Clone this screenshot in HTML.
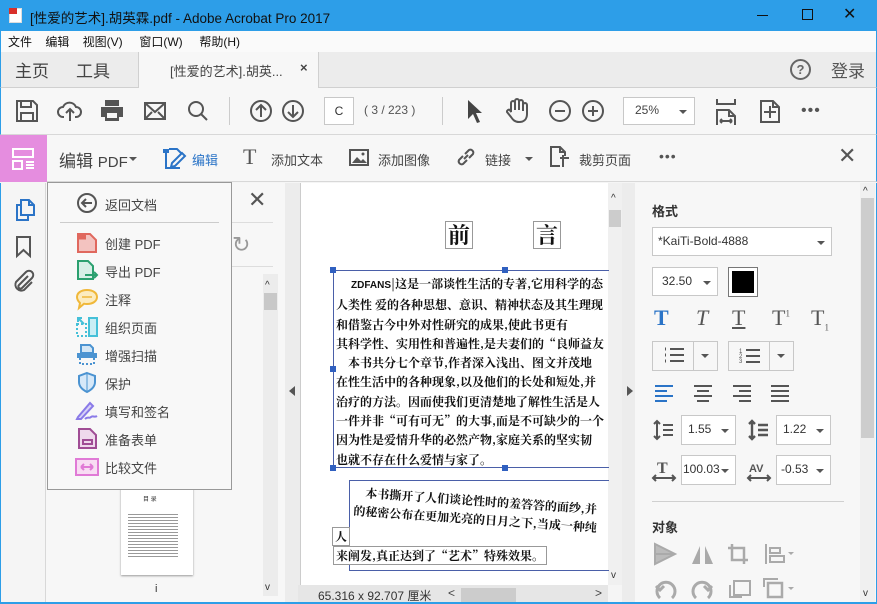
<!DOCTYPE html>
<html><head><meta charset="utf-8"><style>
*{margin:0;padding:0;box-sizing:border-box}
body{width:877px;height:604px;overflow:hidden;position:relative;background:#f5f5f5;font-family:"Liberation Sans","Noto Sans CJK SC",sans-serif;color:#333;font-size:13px}
.a{position:absolute}
svg{position:absolute;overflow:visible}
.ic{stroke:#555;fill:none;stroke-width:2}
.cj{font-family:"Noto Serif CJK SC","Noto Sans CJK SC",serif;color:#111}
.dd{border:1px solid #c8c8c8;background:#fff}
.ar{width:0;height:0;border-left:4px solid transparent;border-right:4px solid transparent;border-top:4px solid #555}
</style></head><body>
<!-- title bar -->
<div class="a" style="left:0;top:0;width:877px;height:31px;background:#2d9ee8"></div>
<div class="a" style="left:9px;top:8px;width:13px;height:15px;background:#fff;border:1px solid #ddd"></div>
<div class="a" style="left:9px;top:8px;width:8px;height:6px;background:#d9302a"></div>
<div class="a" style="left:30px;top:7px;font-size:13.5px;color:#111">[性爱的艺术].胡英霖.pdf - Adobe Acrobat Pro 2017</div>
<div class="a" style="left:757px;top:15px;width:11px;height:1px;background:#111"></div>
<div class="a" style="left:802px;top:9px;width:11px;height:11px;border:1px solid #111"></div>
<div class="a" style="left:843px;top:4px;font-size:16px;color:#111">✕</div>
<!-- menu -->
<div class="a" style="left:0;top:31px;width:877px;height:21px;background:#fafafa;border-left:1px solid #2d9ee8;border-right:1px solid #2d9ee8"></div>
<div class="a" style="left:8px;top:33px;font-size:12px;color:#111;word-spacing:0">文件&nbsp;&nbsp;&nbsp;&nbsp;编辑&nbsp;&nbsp;&nbsp;&nbsp;视图(V)&nbsp;&nbsp;&nbsp;&nbsp;&nbsp;窗口(W)&nbsp;&nbsp;&nbsp;&nbsp;&nbsp;帮助(H)</div>
<!-- tabs -->
<div class="a" style="left:0;top:52px;width:877px;height:36px;background:#ececec;border-bottom:1px solid #d0d0d0;border-left:1px solid #2d9ee8;border-right:1px solid #2d9ee8"></div>
<div class="a" style="left:15px;top:57px;font-size:17px;color:#444">主页</div>
<div class="a" style="left:76px;top:57px;font-size:17px;color:#444">工具</div>
<div class="a" style="left:138px;top:52px;width:181px;height:37px;background:#f7f7f7;border-left:1px solid #d0d0d0;border-right:1px solid #d0d0d0"></div>
<div class="a" style="left:170px;top:61px;font-size:13px;color:#444">[性爱的艺术].胡英...</div>
<div class="a" style="left:300px;top:60px;font-size:13px;color:#444;font-weight:bold">×</div>
<div class="a" style="left:790px;top:59px;width:21px;height:21px;border:2px solid #666;border-radius:50%;text-align:center;font-size:13px;line-height:17px;color:#666;font-weight:bold">?</div>
<div class="a" style="left:831px;top:57px;font-size:17px;color:#555">登录</div>
<!-- toolbar -->
<div class="a" style="left:0;top:88px;width:877px;height:47px;background:#f7f7f7;border-bottom:1px solid #d8d8d8;border-left:1px solid #2d9ee8;border-right:1px solid #2d9ee8"></div>
<svg style="left:16px;top:100px" width="22" height="22"><path class="ic" d="M1 1h16l4 4v16H1z M5 1v6h10V1 M5 21v-8h12v8"/></svg>
<svg style="left:58px;top:100px" width="24" height="22"><path class="ic" d="M6 17H5a5 5 0 0 1 0-10 7 7 0 0 1 13 0 5 5 0 0 1 0 10h-1 M12 21v-11 M8 13l4-4 4 4"/></svg>
<svg style="left:100px;top:99px" width="24" height="22"><path d="M5 1h14v6H5z M1 8h22v10h-4v4H5v-4H1z" fill="#555"/><rect x="7" y="14" width="10" height="5" fill="#f7f7f7"/></svg>
<svg style="left:144px;top:102px" width="22" height="18"><path class="ic" d="M1 1h20v16H1z M1 1l10 9 10-9 M1 17l7-7 M21 17l-7-7"/></svg>
<svg style="left:187px;top:100px" width="22" height="22"><circle class="ic" cx="9" cy="9" r="7"/><path class="ic" stroke-width="3" d="M14 14l6 6"/></svg>
<div class="a" style="left:229px;top:97px;width:1px;height:28px;background:#ccc"></div>
<svg style="left:250px;top:100px" width="22" height="22"><circle class="ic" cx="11" cy="11" r="10"/><path class="ic" d="M11 17V5 M6 10l5-5 5 5"/></svg>
<svg style="left:282px;top:100px" width="22" height="22"><circle class="ic" cx="11" cy="11" r="10"/><path class="ic" d="M11 5v12 M6 12l5 5 5-5"/></svg>
<div class="a dd" style="left:324px;top:97px;width:30px;height:28px;text-align:center;line-height:26px;font-size:12px">C</div>
<div class="a" style="left:364px;top:103px;font-size:12px;color:#555">( 3 / 223 )</div>
<div class="a" style="left:442px;top:97px;width:1px;height:28px;background:#ccc"></div>
<svg style="left:467px;top:99px" width="16" height="24"><path d="M1 1l14 13h-6l4 9-3 1-4-9-5 5z" fill="#444"/></svg>
<svg style="left:505px;top:98px" width="24" height="26"><path class="ic" stroke-width="1.8" d="M6 14V5a2 2 0 0 1 4 0v7V3a2 2 0 0 1 4 0v9V4a2 2 0 0 1 4 0v9V7a2 2 0 0 1 4 0v9c0 5-3 8-8 8-4 0-6-2-8-5l-4-5a2 2 0 0 1 3-2z"/></svg>
<svg style="left:549px;top:100px" width="22" height="22"><circle class="ic" cx="11" cy="11" r="10"/><path class="ic" d="M6 11h10"/></svg>
<svg style="left:582px;top:100px" width="22" height="22"><circle class="ic" cx="11" cy="11" r="10"/><path class="ic" d="M6 11h10 M11 6v10"/></svg>
<div class="a dd" style="left:623px;top:97px;width:72px;height:28px"></div>
<div class="a" style="left:635px;top:103px;font-size:12px;color:#444">25%</div>
<div class="a ar" style="left:679px;top:110px"></div>
<svg style="left:716px;top:99px" width="20" height="26"><path class="ic" d="M1 0v5h18V0 M1 26V11h12l6 6v9 M13 11v6h6 M4 22h12 M4 22l2-2 M4 22l2 2 M16 22l-2-2 M16 22l-2 2" stroke-width="1.8"/></svg>
<svg style="left:760px;top:100px" width="20" height="23"><path class="ic" stroke-width="1.8" d="M1 1h12l6 6v15H1z M13 1v6h6 M10 6v12 M4 12h12"/></svg>
<div class="a" style="left:801px;top:102px;font-size:16px;color:#555;letter-spacing:1px">•••</div>
<!-- edit toolbar -->
<div class="a" style="left:0;top:135px;width:877px;height:47px;background:#f7f7f7;border-bottom:1px solid #d8d8d8;border-left:1px solid #2d9ee8;border-right:1px solid #2d9ee8"></div>
<div class="a" style="left:0;top:135px;width:47px;height:47px;background:#e58ddf"></div>
<svg style="left:12px;top:148px" width="24" height="22"><path stroke="#fff" stroke-width="2" fill="none" d="M1 1h20v8H1z M1 13h9v8H1z M14 14h8 M14 17h8 M14 20h8"/></svg>
<div class="a" style="left:59px;top:147px;font-size:17px;color:#444">编辑 <span style="font-size:15px">PDF</span></div>
<div class="a ar" style="left:129px;top:157px"></div>
<svg style="left:162px;top:147px" width="24" height="22"><path d="M1 2h6v4H1z" fill="#2b74c7"/><path stroke="#2b74c7" stroke-width="2" fill="none" d="M4 6v15h14 M7 2h8l4 4 M10 16l10-10 3 3-10 10-4 1z"/></svg>
<div class="a" style="left:192px;top:150px;font-size:13px;color:#2b74c7">编辑</div>
<div class="a" style="left:243px;top:144px;font-size:22px;color:#555;font-family:'Liberation Serif',serif">T</div>
<div class="a" style="left:271px;top:150px;font-size:13px;color:#444">添加文本</div>
<svg style="left:349px;top:149px" width="20" height="17"><rect class="ic" x="1" y="1" width="18" height="15"/><path d="M3 14l5-6 4 4 2-2 4 4z" fill="#555"/><circle cx="14" cy="5" r="1.5" fill="#555"/></svg>
<div class="a" style="left:378px;top:150px;font-size:13px;color:#444">添加图像</div>
<svg style="left:455px;top:146px" width="22" height="22"><path class="ic" d="M9 13l4-4 M8 10l-4 4a3 3 0 0 0 4 4l4-4 M14 12l4-4a3 3 0 0 0-4-4l-4 4"/></svg>
<div class="a" style="left:485px;top:150px;font-size:13px;color:#444">链接</div>
<div class="a ar" style="left:525px;top:157px"></div>
<svg style="left:550px;top:146px" width="20" height="22"><path class="ic" stroke-width="1.8" d="M10 20H1V1h9l5 5v4 M10 1v5h5 M10 12h9 M13 9v12"/></svg>
<div class="a" style="left:579px;top:150px;font-size:13px;color:#444">裁剪页面</div>
<div class="a" style="left:659px;top:148px;font-size:14px;color:#555;letter-spacing:1px">•••</div>
<div class="a" style="left:838px;top:143px;font-size:22px;color:#555">✕</div>
<!-- left nav -->
<div class="a" style="left:0;top:183px;width:46px;height:421px;background:#f5f5f5;border-left:1px solid #2d9ee8;border-right:1px solid #d8d8d8"></div>
<svg style="left:15px;top:199px" width="20" height="22"><path stroke="#2b74c7" stroke-width="2" fill="none" d="M6 1h8l5 5v10H6z M14 1v5h5 M6 6H2v15h11v-5"/></svg>
<svg style="left:16px;top:236px" width="16" height="22"><path class="ic" d="M1 1h13v19l-6.5-6L1 20z"/></svg>
<svg style="left:13px;top:270px" width="22" height="22"><path class="ic" d="M15 6l-9 9a2 2 0 0 0 3 3l10-10a4 4 0 0 0-6-6L3 12a6 6 0 0 0 8 8l8-8"/></svg>
<!-- left panel -->
<div class="a" style="left:46px;top:183px;width:239px;height:421px;background:#f7f7f7"></div>
<div class="a" style="left:248px;top:187px;font-size:22px;color:#555">✕</div>
<div class="a" style="left:225px;top:222px;width:48px;height:1px;background:#ddd"></div>
<div class="a" style="left:225px;top:266px;width:48px;height:1px;background:#ddd"></div>
<div class="a" style="left:232px;top:232px;font-size:22px;color:#999">↻</div>
<div class="a" style="left:263px;top:274px;width:15px;height:322px;background:#ececec"></div>
<div class="a" style="left:265px;top:280px;font-size:10px;color:#333">^</div>
<div class="a" style="left:264px;top:293px;width:13px;height:17px;background:#c8c8c8"></div>
<div class="a" style="left:265px;top:582px;font-size:10px;color:#333">v</div>
<div class="a" style="left:121px;top:485px;width:72px;height:90px;background:#fff;box-shadow:0 1px 2px #999"></div>
<div class="a" style="left:143px;top:494px;font-size:6px;color:#333">目 录</div>
<div class="a" style="left:128px;top:512px;width:50px;height:46px;background:repeating-linear-gradient(#fff 0 2px,#999 2px 3px)"></div>
<div class="a" style="left:155px;top:583px;font-size:11px;color:#333">i</div>
<div class="a" style="left:285px;top:183px;width:15px;height:421px;background:#ececec"></div>
<div class="a" style="left:289px;top:386px;width:0;height:0;border-top:5px solid transparent;border-bottom:5px solid transparent;border-right:6px solid #555"></div>
<!-- popup menu -->
<div class="a" style="left:47px;top:182px;width:185px;height:308px;background:#f8f8f8;border:1px solid #999"></div>
<div class="a" style="left:60px;top:222px;width:159px;height:1px;background:#ccc"></div>
<svg style="left:77px;top:193px" width="20" height="20"><circle cx="10" cy="10" r="9" stroke="#555" stroke-width="2" fill="none"/><path d="M15 10H6 M9 6l-4 4 4 4" stroke="#555" stroke-width="2" fill="none"/></svg>
<div class="a" style="left:105px;top:195px;font-size:13px;color:#444">返回文档</div>
<svg style="left:77px;top:233px" width="20" height="20"><path d="M1 1h12l6 6v12H1z" fill="#f3c3c0" stroke="#e0685e" stroke-width="2"/><path d="M1 4h8" stroke="#e0685e" stroke-width="5"/></svg>
<div class="a" style="left:105px;top:234px;font-size:13px;color:#444">创建 PDF</div>
<svg style="left:77px;top:260px" width="22" height="20"><path d="M1 1h10l5 5v13H1z" fill="#d6efe6" stroke="#2ba06f" stroke-width="2"/><path d="M8 15h12 M17 12l3 3-3 3" stroke="#2ba06f" stroke-width="2" fill="none"/></svg>
<div class="a" style="left:105px;top:262px;font-size:13px;color:#444">导出 PDF</div>
<svg style="left:76px;top:289px" width="22" height="20"><path d="M11 1c6 0 10 3 10 7s-4 7-10 7c-1 0-2 0-3-.3L3 19l1-5C2 12 1 10 1 8c0-4 4-7 10-7z" fill="#fcecc0" stroke="#f0b83a" stroke-width="2"/><path d="M6 8h10" stroke="#f0b83a" stroke-width="1.5"/></svg>
<div class="a" style="left:105px;top:290px;font-size:13px;color:#444">注释</div>
<svg style="left:76px;top:317px" width="22" height="20"><path d="M1 7v12h9V7z" fill="none" stroke="#45c0d8" stroke-width="2" stroke-dasharray="2 2"/><rect x="13" y="1" width="8" height="18" fill="#c9eef5" stroke="#45c0d8" stroke-width="2"/><path d="M2 1l6 6 M2 5V1h4" stroke="#45c0d8" stroke-width="2" fill="none"/></svg>
<div class="a" style="left:105px;top:318px;font-size:13px;color:#444">组织页面</div>
<svg style="left:76px;top:344px" width="22" height="21"><path d="M5 1h9l3 3v5H5z" fill="#d3e6f5" stroke="#4b93d1" stroke-width="2"/><path d="M1 9h20v5H1z" fill="#4b93d1"/><path d="M4 14v6h14v-6" stroke="#4b93d1" stroke-width="2" fill="none" stroke-dasharray="2 2"/></svg>
<div class="a" style="left:105px;top:346px;font-size:13px;color:#444">增强扫描</div>
<svg style="left:78px;top:372px" width="18" height="21"><path d="M9 1l8 3v6c0 5-4 8-8 10-4-2-8-5-8-10V4z" fill="#d6e8f8" stroke="#4b93d1" stroke-width="2"/><path d="M9 1v19" stroke="#4b93d1" stroke-width="1"/></svg>
<div class="a" style="left:105px;top:374px;font-size:13px;color:#444">保护</div>
<svg style="left:75px;top:400px" width="24" height="21"><path d="M3 17L15 3l3 3L6 19H2z" fill="#d8d2f8" stroke="#8a7ae8" stroke-width="2"/><path d="M10 19c3-3 4 0 6-2s3 1 6-1" stroke="#8a7ae8" stroke-width="2" fill="none"/></svg>
<div class="a" style="left:105px;top:402px;font-size:13px;color:#444">填写和签名</div>
<svg style="left:78px;top:428px" width="19" height="21"><path d="M1 1h11l6 6v13H1z" fill="#efd9ec" stroke="#a04d95" stroke-width="2"/><rect x="5" y="12" width="9" height="4" fill="none" stroke="#a04d95" stroke-width="2"/></svg>
<div class="a" style="left:105px;top:430px;font-size:13px;color:#444">准备表单</div>
<svg style="left:75px;top:458px" width="24" height="18"><rect x="1" y="1" width="22" height="16" fill="#f8dcf3" stroke="#e07ad6" stroke-width="2"/><path d="M6 9h12 M6 9l3-3 M6 9l3 3 M18 9l-3-3 M18 9l-3 3" stroke="#e07ad6" stroke-width="2" fill="none"/></svg>
<div class="a" style="left:105px;top:458px;font-size:13px;color:#444">比较文件</div>
<!-- doc area -->
<div class="a" style="left:300px;top:183px;width:322px;height:402px;background:#fff;border-left:1px solid #ccc"></div>
<div class="a" style="left:608px;top:183px;width:14px;height:402px;background:#f0f0f0"></div>
<div class="a" style="left:611px;top:193px;font-size:10px">^</div>
<div class="a" style="left:609px;top:210px;width:12px;height:17px;background:#ccc"></div>
<div class="a" style="left:611px;top:570px;font-size:10px">v</div>
<div class="a" style="left:622px;top:183px;width:13px;height:421px;background:#ececec"></div>
<div class="a" style="left:627px;top:386px;width:0;height:0;border-top:5px solid transparent;border-bottom:5px solid transparent;border-left:6px solid #555"></div>
<div class="a cj" style="left:445px;top:221px;font-size:22px;font-weight:bold;border:1px solid #999;line-height:26px;padding:0 2px">前</div>
<div class="a cj" style="left:533px;top:221px;font-size:22px;font-weight:bold;border:1px solid #999;line-height:26px;padding:0 2px">言</div>
<div class="a" style="left:333px;top:270px;width:276px;height:198px;border:1px solid #4a5fa8;border-right:none"></div>
<div class="a" style="left:330px;top:267px;width:6px;height:6px;background:#3060c0"></div>
<div class="a" style="left:502px;top:267px;width:6px;height:6px;background:#3060c0"></div>
<div class="a" style="left:330px;top:366px;width:6px;height:6px;background:#3060c0"></div>
<div class="a" style="left:330px;top:465px;width:6px;height:6px;background:#3060c0"></div>
<div class="a" style="left:502px;top:465px;width:6px;height:6px;background:#3060c0"></div>
<div class="a cj" style="left:336px;top:274px;width:272px;height:192px;overflow:hidden;font-size:12px;line-height:19.3px;white-space:nowrap;font-weight:bold">
<div>&nbsp;&nbsp;&nbsp;&nbsp;&nbsp;<span style="font-size:10px;font-family:'Liberation Sans'">ZDFANS</span>|这是一部谈性生活的专著,它用科学的态</div>
<div>人类性 爱的各种思想、意识、精神状态及其生理现</div>
<div>和借鉴古今中外对性研究的成果,使此书更有</div>
<div>其科学性、实用性和普遍性,是夫妻们的“良师益友</div>
<div>&nbsp;&nbsp;&nbsp;&nbsp;本书共分七个章节,作者深入浅出、图文并茂地</div>
<div>在性生活中的各种现象,以及他们的长处和短处,并</div>
<div>治疗的方法。因而使我们更清楚地了解性生活是人</div>
<div>一件并非“可有可无”的大事,而是不可缺少的一个</div>
<div>因为性是爱情升华的必然产物,家庭关系的坚实韧</div>
<div>也就不存在什么爱情与家了。</div>
</div>
<div class="a" style="left:349px;top:480px;width:260px;height:91px;border:1px solid #4a5fa8;border-right:none"></div>
<div class="a cj" style="left:360px;top:484px;width:248px;overflow:hidden;white-space:nowrap;font-size:12px;font-weight:bold;transform:rotate(4deg);transform-origin:left top">&nbsp;&nbsp;本书撕开了人们谈论性时的羞答答的面纱,并</div>
<div class="a cj" style="left:354px;top:502px;width:254px;overflow:hidden;white-space:nowrap;font-size:12px;font-weight:bold;transform:rotate(4deg);transform-origin:left top">的秘密公布在更加光亮的日月之下,当成一种纯</div>
<div class="a cj" style="left:332px;top:527px;font-size:12px;font-weight:bold;border:1px solid #999;padding:0 2px;background:#fff">人</div>
<div class="a cj" style="left:333px;top:546px;font-size:12px;font-weight:bold;border:1px solid #999;padding:0 2px;background:#fff">来阐发,真正达到了“艺术”特殊效果。</div>
<!-- status bar -->
<div class="a" style="left:298px;top:585px;width:310px;height:19px;background:#e6e6e6"></div>
<div class="a" style="left:318px;top:587px;font-size:12px;color:#333">65.316 x 92.707 厘米</div>
<div class="a" style="left:448px;top:586px;font-size:12px;color:#444">&lt;</div>
<div class="a" style="left:461px;top:588px;width:55px;height:14px;background:#ccc"></div>
<div class="a" style="left:595px;top:586px;font-size:12px;color:#444">&gt;</div>
<div class="a" style="left:0;top:602px;width:877px;height:2px;background:#2d9ee8"></div>
<!-- right panel -->
<div class="a" style="left:635px;top:183px;width:242px;height:419px;background:#f7f7f7;border-right:1px solid #2d9ee8"></div>
<div class="a" style="left:860px;top:183px;width:15px;height:419px;background:#f0f0f0"></div>
<div class="a" style="left:861px;top:198px;width:13px;height:240px;background:#cdcdcd"></div>
<div class="a" style="left:863px;top:186px;font-size:10px">^</div>
<div class="a" style="left:863px;top:588px;font-size:10px">v</div>
<div class="a" style="left:652px;top:201px;font-size:13px;font-weight:bold;color:#333">格式</div>
<div class="a dd" style="left:652px;top:227px;width:180px;height:29px"></div>
<div class="a" style="left:658px;top:234px;font-size:12px;color:#333">*KaiTi-Bold-4888</div>
<div class="a ar" style="left:817px;top:241px"></div>
<div class="a dd" style="left:652px;top:267px;width:66px;height:29px"></div>
<div class="a" style="left:662px;top:274px;font-size:12px;color:#333">32.50</div>
<div class="a ar" style="left:703px;top:281px"></div>
<div class="a" style="left:728px;top:267px;width:30px;height:30px;border:1px solid #777;background:#fff;padding:3px"><div style="width:22px;height:22px;background:#000"></div></div>
<div class="a" style="left:654px;top:305px;font-size:22px;font-weight:bold;color:#2b74c7;font-family:'Liberation Serif',serif">T</div>
<div class="a" style="left:696px;top:305px;font-size:22px;font-style:italic;color:#555;font-family:'Liberation Serif',serif">T</div>
<div class="a" style="left:732px;top:305px;font-size:22px;color:#555;font-family:'Liberation Serif',serif;text-decoration:underline">T</div>
<div class="a" style="left:772px;top:305px;font-size:22px;color:#555;font-family:'Liberation Serif',serif">T<sup style="font-size:9px">1</sup></div>
<div class="a" style="left:811px;top:305px;font-size:22px;color:#555;font-family:'Liberation Serif',serif">T<sub style="font-size:9px">1</sub></div>
<div class="a dd" style="left:652px;top:341px;width:66px;height:30px;background:#f7f7f7"></div>
<div class="a" style="left:693px;top:341px;width:1px;height:30px;background:#c8c8c8"></div>
<svg style="left:663px;top:347px" width="22" height="17"><path d="M2 2h1M2 8h1M2 14h1" stroke="#555" stroke-width="3"/><path d="M7 2h14M7 8h14M7 14h14" stroke="#555" stroke-width="2"/></svg>
<div class="a ar" style="left:701px;top:354px"></div>
<div class="a dd" style="left:728px;top:341px;width:66px;height:30px;background:#f7f7f7"></div>
<div class="a" style="left:769px;top:341px;width:1px;height:30px;background:#c8c8c8"></div>
<svg style="left:739px;top:347px" width="22" height="17"><text x="0" y="6" font-size="6" fill="#555" font-family="Liberation Sans">1</text><text x="0" y="11" font-size="6" fill="#555" font-family="Liberation Sans">2</text><text x="0" y="16" font-size="6" fill="#555" font-family="Liberation Sans">3</text><path d="M7 3h14M7 9h14M7 15h14" stroke="#555" stroke-width="2"/></svg>
<div class="a ar" style="left:777px;top:354px"></div>
<svg style="left:655px;top:385px" width="135" height="16"><path d="M0 1h18M0 6h12M0 11h18M0 16h12" stroke="#2b74c7" stroke-width="2"/><path d="M39 1h18M42 6h12M39 11h18M42 16h12 M78 1h18M84 6h12M78 11h18M84 16h12 M116 1h18M116 6h18M116 11h18M116 16h18" stroke="#555" stroke-width="2"/></svg>
<svg style="left:653px;top:419px" width="22" height="22"><path d="M4 2v18 M1 5l3-3 3 3 M1 17l3 3 3-3 M10 6h10M10 11h10M10 16h10" stroke="#555" stroke-width="2" fill="none"/></svg>
<div class="a dd" style="left:681px;top:415px;width:55px;height:30px"></div>
<div class="a" style="left:688px;top:422px;font-size:12px">1.55</div>
<div class="a ar" style="left:721px;top:429px"></div>
<svg style="left:748px;top:419px" width="22" height="22"><path d="M4 2v18 M1 5l3-3 3 3 M1 17l3 3 3-3 M10 6h10M10 11h10M10 16h10" stroke="#555" stroke-width="2.4" fill="none"/></svg>
<div class="a dd" style="left:776px;top:415px;width:55px;height:30px"></div>
<div class="a" style="left:783px;top:422px;font-size:12px">1.22</div>
<div class="a ar" style="left:816px;top:429px"></div>
<svg style="left:652px;top:460px" width="24" height="22"><text x="5" y="13" font-size="16" font-weight="bold" fill="#555" font-family="Liberation Serif">T</text><path d="M1 18h22 M4 15l-3 3 3 3 M20 15l3 3-3 3" stroke="#555" stroke-width="2" fill="none"/></svg>
<div class="a dd" style="left:681px;top:455px;width:55px;height:30px"></div>
<div class="a" style="left:683px;top:462px;font-size:12px">100.03</div>
<div class="a ar" style="left:721px;top:469px"></div>
<svg style="left:747px;top:460px" width="24" height="22"><text x="2" y="12" font-size="11" font-weight="bold" fill="#555" font-family="Liberation Sans">AV</text><path d="M1 18h22 M4 15l-3 3 3 3 M20 15l3 3-3 3" stroke="#555" stroke-width="2" fill="none"/></svg>
<div class="a dd" style="left:776px;top:455px;width:55px;height:30px"></div>
<div class="a" style="left:781px;top:462px;font-size:12px">-0.53</div>
<div class="a ar" style="left:816px;top:469px"></div>
<div class="a" style="left:652px;top:501px;width:192px;height:1px;background:#d0d0d0"></div>
<div class="a" style="left:652px;top:517px;font-size:13px;font-weight:bold;color:#333">对象</div>
<svg style="left:654px;top:543px" width="160" height="22"><path d="M1 1l20 10L1 21z M1 11h20" stroke="#aaa" stroke-width="2" fill="#bbb"/><path d="M46 3L38 21h8z M51 3v18h8z" fill="#aaa"/><path d="M78 1v16h16 M74 5h16v16" stroke="#aaa" stroke-width="2.5" fill="none"/><path d="M112 1v20 M116 5h10v5h-10z M116 13h14v6h-14z" stroke="#aaa" stroke-width="2" fill="none"/><path d="M134 9l3 3 3-3z" fill="#aaa"/></svg>
<svg style="left:654px;top:578px" width="160" height="22"><path d="M6 20a9 9 0 1 1 12 0 M2 8l4 4 4-4" stroke="#aaa" stroke-width="3" fill="none"/><path d="M42 20a9 9 0 1 1 12 0 M58 8l-4 4-4-4" stroke="#aaa" stroke-width="3" fill="none"/><rect x="80" y="3" width="16" height="14" stroke="#aaa" stroke-width="2" fill="none"/><path d="M76 7v12h12" stroke="#aaa" stroke-width="2" fill="none"/><rect x="114" y="5" width="14" height="14" stroke="#aaa" stroke-width="2.5" fill="none"/><path d="M110 9V1h14" stroke="#aaa" stroke-width="2" fill="none"/><path d="M134 9l3 3 3-3z" fill="#aaa"/></svg>
</body></html>
